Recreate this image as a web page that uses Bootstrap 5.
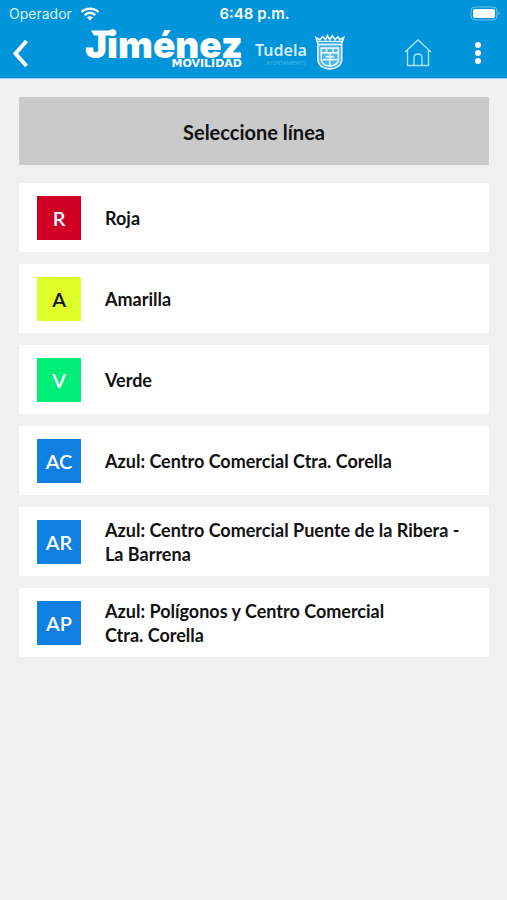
<!DOCTYPE html>
<html lang="es">
<head>
<meta charset="utf-8">
<meta name="viewport" content="width=device-width, initial-scale=1">
<title>Jiménez Movilidad – Seleccione línea</title>
<link href="https://cdn.jsdelivr.net/npm/bootstrap@5.3.0/dist/css/bootstrap.min.css" rel="stylesheet">
<style>
body { background: #f0f0f0; color: #111; font-family: Lato, "Noto Sans", sans-serif; }
.app-header { background: #0094db; border-bottom: 1px solid #8fd0ef; color: #fff; }
.status-bar { height: 27px; font: 14px/27px Inter, sans-serif; padding: 0 7px 0 9px; }
.status-bar .carrier { color: #d9f1fc; }
.status-bar .clock { font-weight: 600; font-size: 15px; }
.tool-bar { height: 51px; padding: 0 7px 0 12px; }
.tool-bar svg, .status-bar svg { display: block; }
.brand { margin-left: 54px; }
.crest { margin-left: 9px; }
.page { padding: 18px 18px 18px 19px; }
.line-title { background: #cacaca; font-size: 20px; line-height: 28px; font-weight: 700; padding: 21px 0 19px; }
.line-item { min-height: 69px; padding: 10px 18px; gap: 24px; font-size: 18px; line-height: 24px; font-weight: 700; color: #111; text-decoration: none; }
.line-code { width: 44px; height: 44px; font-size: 20px; font-weight: 600; }
.line-list { gap: 12px; margin-top: 18px; }
.red { background: #d00024; } .yellow { background: #deff28; }
.green { background: #00ee78; } .blue { background: #0f7fe2; }
.two-line { max-width: 310px; }
</style>
<script src="https://cdn.jsdelivr.net/npm/bootstrap@5.3.0/dist/js/bootstrap.bundle.min.js"></script>
</head>
<body>
<header class="app-header">
  <div class="status-bar row g-0">
    <div class="col d-flex align-items-center gap-2 carrier"><span>Operador</span>
      <svg width="20" height="14" viewBox="0 0 20 14" fill="none" stroke="#fff" stroke-width="2.3" aria-hidden="true"><path d="M1.5 5C6.500 .5 13.500 .5 18.500 5M4.700 8.200C8 5.200 12 5.200 15.300 8.200"/><path d="M10 13.500 7 10.600Q10 8 13 10.600Z" fill="#fff" stroke="none"/></svg>
    </div>
    <div class="col-auto clock">6:48 p.m.</div>
    <div class="col d-flex align-items-center justify-content-end">
      <svg width="30" height="15" viewBox="0 0 30 15" aria-hidden="true"><rect x="1" y="1" width="26" height="13" rx="4" fill="none" stroke="#72c4ed"/><rect x="3" y="3" width="22" height="9" rx="2" fill="#fff"/><path d="M28.500 5.500q2 2 0 4z" fill="#72c4ed"/></svg>
    </div>
  </div>
  <nav class="tool-bar d-flex align-items-center" aria-label="Principal">
    <button class="btn p-0 border-0" type="button" aria-label="Volver"><svg width="18" height="30" viewBox="0 0 18 30" fill="none" stroke="#fff" stroke-width="4"><path d="M14.500 3 3.500 15.500 14.500 28"/></svg></button>
    <svg class="brand flex-shrink-0" width="162" height="51" viewBox="0 0 162 51" fill="#fff" overflow="visible" role="img" aria-label="Jiménez Movilidad">
      <path d="M7 3.500H29V8.500H10Z"/>
      <text x="1" y="31" font-family="Inter, sans-serif" font-weight="900" font-size="37">Jiménez</text>
      <text x="158" y="40" text-anchor="end" font-family="DejaVu Sans, sans-serif" font-weight="700" font-size="11">MOVILIDAD</text>
    </svg>
    <svg class="crest flex-shrink-0" width="92" height="42" viewBox="0 0 92 42" role="img" aria-label="Tudela Ayuntamiento">
      <text x="0" y="24" fill="#d5effb" font-family="Noto Sans, sans-serif" font-weight="600" font-size="16">Tudela</text>
      <text x="11" y="33" fill="#4cb5e8" font-family="Inter, sans-serif" font-size="5">AYUNTAMIENTO</text>
      <g transform="translate(5 0) scale(.95)" fill="none" stroke="#e2f5fd" stroke-width="1.800"><path d="M61 13V30Q62 38 73.500 39Q85 38 86 30V13Z" fill="#4db5e7"/><path d="M64.500 17V29Q65 35 73.500 36Q82 35 82.500 29V17Z"/><path d="M61 12 59 6 63 8 66 5 69 8 71 4 73.500 8 76 4 79 8 82 5 84 8 88 6 86 12M61 10H86"/><path d="M65 22H82M66 29H81M70 17V22M77 17V22M69 26H78M73.500 22V36"/></g>
    </svg>
    <div class="ms-auto d-flex align-items-center gap-4">
      <button class="btn p-0 border-0" type="button" aria-label="Inicio"><svg width="28" height="30" viewBox="0 0 28 30" fill="none" stroke="#aee2f8" stroke-width="1.400"><path d="M1 14 14 2 27 14M3.500 12V27.500H24.500V12M10 27V20Q10 16 14 16T18 20V27"/></svg></button>
      <button class="btn p-0 border-0" type="button" aria-label="Más opciones"><svg width="44" height="24" viewBox="0 0 44 24" fill="#fff"><circle cx="22" cy="4" r="3"/><circle cx="22" cy="12" r="3"/><circle cx="22" cy="20" r="3"/></svg></button>
    </div>
  </nav>
</header>
<main class="page">
  <h1 class="line-title text-center m-0">Seleccione línea</h1>
  <div class="line-list d-flex flex-column">
    <a class="line-item d-flex align-items-center bg-white" href="#roja"><span class="line-code red d-flex flex-shrink-0 align-items-center justify-content-center text-white">R</span><span>Roja</span></a>
    <a class="line-item d-flex align-items-center bg-white" href="#amarilla"><span class="line-code yellow d-flex flex-shrink-0 align-items-center justify-content-center">A</span><span>Amarilla</span></a>
    <a class="line-item d-flex align-items-center bg-white" href="#verde"><span class="line-code green d-flex flex-shrink-0 align-items-center justify-content-center text-white">V</span><span>Verde</span></a>
    <a class="line-item d-flex align-items-center bg-white" href="#ac"><span class="line-code blue d-flex flex-shrink-0 align-items-center justify-content-center text-white">AC</span><span>Azul: Centro Comercial Ctra. Corella</span></a>
    <a class="line-item d-flex align-items-center bg-white" href="#ar"><span class="line-code blue d-flex flex-shrink-0 align-items-center justify-content-center text-white">AR</span><span>Azul: Centro Comercial Puente de la Ribera - La Barrena</span></a>
    <a class="line-item d-flex align-items-center bg-white" href="#ap"><span class="line-code blue d-flex flex-shrink-0 align-items-center justify-content-center text-white">AP</span><span class="two-line">Azul: Polígonos y Centro Comercial Ctra. Corella</span></a>
  </div>
</main>
</body>
</html>
